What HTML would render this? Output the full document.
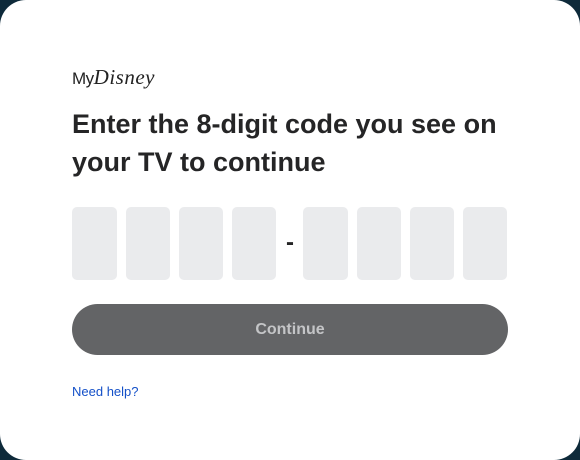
<!DOCTYPE html>
<html><head><meta charset="utf-8"><style>
html,body{margin:0;padding:0;width:580px;height:460px;background:#0e2a3a;overflow:hidden}
.card{position:absolute;left:0;top:0;width:580px;height:460px;background:#fff;border-radius:26px;font-family:"Liberation Sans",sans-serif}
.logo{position:absolute;left:72px;top:65px;font-size:17px;color:#222;}
.logo .my{font-family:"Liberation Sans",sans-serif;letter-spacing:-0.5px}
.logo .d{font-family:"Liberation Serif",serif;font-style:italic;font-size:21px;letter-spacing:0.5px}
h1{position:absolute;left:72px;top:105px;margin:0;font-size:27px;line-height:38px;font-weight:bold;color:#252526;width:460px}
.b{position:absolute;top:207px;width:45px;height:73px;background:#eaebed;border-radius:5px}
.dash{position:absolute;left:286px;top:229px;font-size:24px;font-weight:bold;color:#252526}
.btn{position:absolute;left:72px;top:304px;width:436px;height:51px;background:#636466;border-radius:26px;color:#c4c5c7;font-weight:bold;font-size:16px;text-align:center;line-height:51px}
.help{position:absolute;left:72px;top:384px;font-size:13px;color:#1450c8}
</style></head><body>
<div class="card">
<div class="logo"><span class="my">My</span><span class="d">Disney</span></div>
<h1>Enter the 8-digit code you see on your TV to continue</h1>
<div class="b" style="left:72px"></div>
<div class="b" style="left:126px;width:44px"></div>
<div class="b" style="left:179px;width:44px"></div>
<div class="b" style="left:232px;width:44px"></div>
<div class="dash">-</div>
<div class="b" style="left:303px"></div>
<div class="b" style="left:357px;width:44px"></div>
<div class="b" style="left:410px;width:44px"></div>
<div class="b" style="left:463px;width:44px"></div>
<div class="btn">Continue</div>
<div class="help">Need help?</div>
</div>
</body></html>
